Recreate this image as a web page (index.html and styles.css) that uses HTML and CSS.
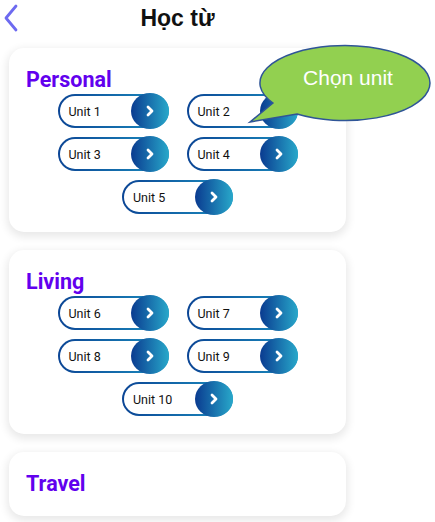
FILE: index.html
```html
<!DOCTYPE html>
<html lang="vi">
<head>
<meta charset="utf-8">
<title>Học từ</title>
<link rel="stylesheet" href="styles.css">
</head>
<body>
<div class="page">
  <header class="header">
    <button class="back" aria-label="Back">
      <svg width="14" height="28" viewBox="0 0 14 28"><polyline points="12,2 2,14 12,26" fill="none" stroke="#6d6af0" stroke-width="2.8" stroke-linecap="round" stroke-linejoin="round"/></svg>
    </button>
    <h1 class="title">Học từ</h1>
  </header>

  <main class="list">
    <section class="card">
      <h2 class="card-title">Personal</h2>
      <div class="units">
        <a class="unit"><span class="unit-label">Unit 1</span><span class="go"><svg width="10" height="12" viewBox="0 0 10 12"><polyline points="3,2 7,6 3,10" fill="none" stroke="#fff" stroke-width="2.8" stroke-linecap="round" stroke-linejoin="round"/></svg></span></a>
        <a class="unit"><span class="unit-label">Unit 2</span><span class="go"><svg width="10" height="12" viewBox="0 0 10 12"><polyline points="3,2 7,6 3,10" fill="none" stroke="#fff" stroke-width="2.8" stroke-linecap="round" stroke-linejoin="round"/></svg></span></a>
        <a class="unit"><span class="unit-label">Unit 3</span><span class="go"><svg width="10" height="12" viewBox="0 0 10 12"><polyline points="3,2 7,6 3,10" fill="none" stroke="#fff" stroke-width="2.8" stroke-linecap="round" stroke-linejoin="round"/></svg></span></a>
        <a class="unit"><span class="unit-label">Unit 4</span><span class="go"><svg width="10" height="12" viewBox="0 0 10 12"><polyline points="3,2 7,6 3,10" fill="none" stroke="#fff" stroke-width="2.8" stroke-linecap="round" stroke-linejoin="round"/></svg></span></a>
        <a class="unit unit-center"><span class="unit-label">Unit 5</span><span class="go"><svg width="10" height="12" viewBox="0 0 10 12"><polyline points="3,2 7,6 3,10" fill="none" stroke="#fff" stroke-width="2.8" stroke-linecap="round" stroke-linejoin="round"/></svg></span></a>
      </div>
    </section>

    <section class="card">
      <h2 class="card-title">Living</h2>
      <div class="units">
        <a class="unit"><span class="unit-label">Unit 6</span><span class="go"><svg width="10" height="12" viewBox="0 0 10 12"><polyline points="3,2 7,6 3,10" fill="none" stroke="#fff" stroke-width="2.8" stroke-linecap="round" stroke-linejoin="round"/></svg></span></a>
        <a class="unit"><span class="unit-label">Unit 7</span><span class="go"><svg width="10" height="12" viewBox="0 0 10 12"><polyline points="3,2 7,6 3,10" fill="none" stroke="#fff" stroke-width="2.8" stroke-linecap="round" stroke-linejoin="round"/></svg></span></a>
        <a class="unit"><span class="unit-label">Unit 8</span><span class="go"><svg width="10" height="12" viewBox="0 0 10 12"><polyline points="3,2 7,6 3,10" fill="none" stroke="#fff" stroke-width="2.8" stroke-linecap="round" stroke-linejoin="round"/></svg></span></a>
        <a class="unit"><span class="unit-label">Unit 9</span><span class="go"><svg width="10" height="12" viewBox="0 0 10 12"><polyline points="3,2 7,6 3,10" fill="none" stroke="#fff" stroke-width="2.8" stroke-linecap="round" stroke-linejoin="round"/></svg></span></a>
        <a class="unit unit-center"><span class="unit-label">Unit 10</span><span class="go"><svg width="10" height="12" viewBox="0 0 10 12"><polyline points="3,2 7,6 3,10" fill="none" stroke="#fff" stroke-width="2.8" stroke-linecap="round" stroke-linejoin="round"/></svg></span></a>
      </div>
    </section>

    <section class="card">
      <h2 class="card-title">Travel</h2>
    </section>
  </main>

  <div class="bubble">
    <svg class="bubble-shape" width="195" height="90" viewBox="240 40 195 90">
      <path d="M273 103 L250 122 L297 114 A85 37.5 0 1 0 273 103 Z" fill="#92d050" stroke="#2f5597" stroke-width="1.5" stroke-linejoin="miter"/>
    </svg>
    <span class="bubble-text">Chọn unit</span>
  </div>
</div>
</body>
</html>
```

FILE: styles.css
```css
* { box-sizing: border-box; }

html, body {
  margin: 0;
  padding: 0;
  background: #ffffff;
}

.page {
  position: relative;
  width: 435px;
  height: 522px;
  overflow: hidden;
  font-family: Roboto, "Liberation Sans", sans-serif;
}

.header {
  position: relative;
  height: 48px;
  width: 355px;
  display: flex;
  justify-content: center;
}

.back {
  position: absolute;
  left: 4px;
  top: 4px;
  padding: 0;
  border: 0;
  background: none;
  width: 14px;
  height: 28px;
}
.back svg { display: block; }

.title {
  margin: 0;
  padding-top: 5px;
  font-family: "Liberation Sans", Arial, sans-serif;
  font-weight: bold;
  font-size: 23px;
  line-height: 27px;
  color: #111;
}

.list {
  width: 355px;
  padding: 0 9px;
  display: flex;
  flex-direction: column;
  gap: 18px;
}

.card {
  background: #fff;
  border-radius: 15px;
  padding: 20px 17px 18px;
  box-shadow: 0 3px 9px 2px rgba(0, 0, 0, 0.09);
}

.card-title {
  margin: 0 0 2px;
  font-family: Roboto, sans-serif;
  font-weight: bold;
  font-size: 21.5px;
  line-height: 24px;
  color: #6200ee;
}

.units {
  display: grid;
  grid-template-columns: 111px 111px;
  column-gap: 18px;
  row-gap: 9px;
  justify-content: center;
}

.unit {
  display: flex;
  align-items: center;
  justify-content: space-between;
  height: 34px;
  border: 2px solid transparent;
  border-radius: 17px;
  background:
    linear-gradient(#fff, #fff) padding-box,
    linear-gradient(to right, #0b4595, #1c8fc0) border-box;
  color: #111;
  text-decoration: none;
}

.unit-center {
  grid-column: 1 / span 2;
  justify-self: center;
  width: 111px;
}

.unit-label {
  padding-left: 9px;
  font-size: 12.5px;
  color: #111;
}

.go {
  width: 38px;
  height: 36px;
  margin: -2px -2px -2px 0;
  border-radius: 50%;
  background: linear-gradient(to right, #0a3b90, #28a8ca);
  display: flex;
  align-items: center;
  justify-content: center;
}
.go svg { display: block; }

.bubble {
  position: absolute;
  left: 240px;
  top: 40px;
  width: 195px;
  height: 90px;
}

.bubble-shape {
  position: absolute;
  left: 0;
  top: 0;
}

.bubble-text {
  position: absolute;
  left: 57px;
  top: 26px;
  width: 102px;
  text-align: center;
  font-family: "Liberation Sans", Arial, sans-serif;
  font-size: 21px;
  line-height: 24px;
  color: #fff;
}
```
